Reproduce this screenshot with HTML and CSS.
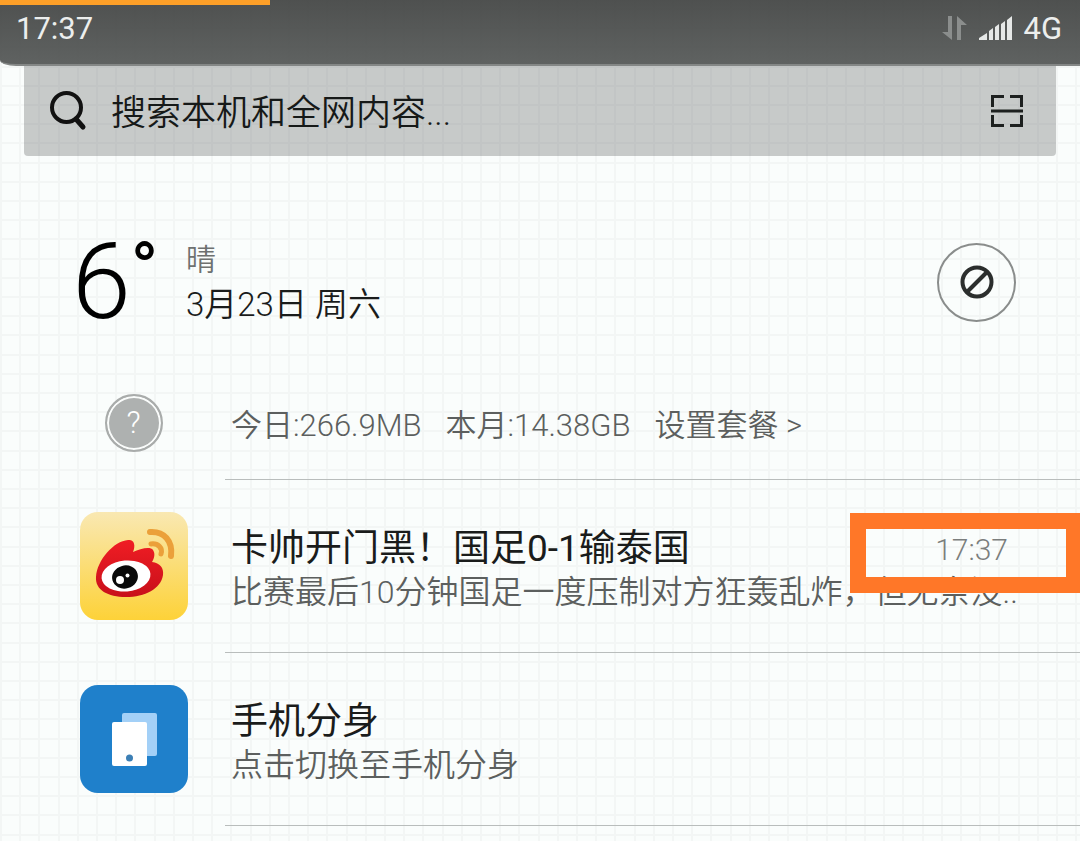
FILE: index.html
```html
<!DOCTYPE html>
<html lang="zh-CN">

<head>
    <meta charset="utf-8">
    <title>通知中心</title>
    <meta name="viewport" content="width=device-width, initial-scale=1">
    <link rel="stylesheet" href="styles.css">
</head>

<body>
    <header class="status-bar">
        <div class="progress"></div>
        <span class="clock">17:37</span>
        <div class="status-icons">
            <svg class="data-arrows" width="28" height="26" viewBox="0 0 28 26">
                <path d="M7 1h4v24L1 17h6zM16 25V1l10 9h-6v15z" fill="#8b8e8d" />
            </svg>
            <svg class="signal" width="34" height="24" viewBox="0 0 34 24">
                <path d="M0 24v-2l8-5v7zM10 24v-9l4-3v12zM16 24V11l4-3v16zM22 24V8l4-3v19zM28 24V4l5-4v24z" fill="#e6e8e7" />
            </svg>
            <span class="network">4G</span>
        </div>
    </header>

    <form class="search">
        <svg width="38" height="40" viewBox="0 0 38 40" fill="none" stroke="#111">
            <circle cx="16.500" cy="16.500" r="14.500" stroke-width="4" />
            <path d="M26 28l7 8" stroke-width="5" stroke-linecap="round" />
        </svg>
        <input type="text" class="search-input" placeholder="搜索本机和全网内容..." aria-label="搜索">
        <button type="button" class="scan" aria-label="扫一扫">
            <svg width="34" height="34" viewBox="0 0 34 34" fill="none" stroke="#1d201f" stroke-width="3">
                <path d="M14 2.500H2.500V13M20 2.500h11.500V13M2.500 21v10.500H14M31.500 21v10.500H20M1 17h32" />
            </svg>
        </button>
    </form>

    <main>
        <section class="weather">
            <div class="temp">6<span class="degree">°</span></div>
            <div class="weather-info">
                <div class="condition">晴</div>
                <div class="date">3月23日 周六</div>
            </div>
            <button type="button" class="clear-btn" aria-label="清除通知">
                <svg width="34" height="34" viewBox="0 0 34 34" fill="none" stroke="#2b2e2d" stroke-width="4">
                    <circle cx="17" cy="17" r="14.5" />
                    <path d="M7 27L27 7" />
                </svg>
            </button>
        </section>

        <section class="row usage">
            <div class="row-icon">
                <span class="help">?</span>
            </div>
            <div class="row-body usage-body">
                <span>今日:266.9MB</span>
                <span>本月:14.38GB</span>
                <a href="#" class="plan">设置套餐 &gt;</a>
            </div>
        </section>

        <article class="row">
            <div class="row-icon">
                <svg class="app-icon" viewBox="0 0 108 108">
                    <defs>
                        <linearGradient id="gold" x1="0" y1="0" x2="0" y2="1">
                            <stop offset="0" stop-color="#f9e8b2" />
                            <stop offset="1" stop-color="#fdd238" />
                        </linearGradient>
                        <linearGradient id="red" x1="0" y1="0" x2="0" y2="1">
                            <stop offset="0" stop-color="#f01d24" />
                            <stop offset="1" stop-color="#c8101a" />
                        </linearGradient>
                    </defs>
                    <rect width="108" height="108" rx="18" fill="url(#gold)" />
                    <path d="M16 65C17 48 34 29 48 28c6-1 8 5 5 12 7-3 17-6 20-2 2 3 2 7-1 12 8 1 12 6 11 13C81 77 65 85 46 85 28 85 15 78 16 65z" fill="url(#red)" />
                    <ellipse cx="46" cy="64" rx="24.500" ry="15.500" fill="#fff" transform="rotate(-5 46 64)" />
                    <ellipse cx="45" cy="65" rx="13" ry="11.500" fill="#0a0a0a" transform="rotate(-15 45 65)" />
                    <circle cx="40" cy="68" r="4" fill="#fff" />
                    <circle cx="47.500" cy="63.500" r="2" fill="#fff" />
                    <g fill="none" stroke="#eba03a" stroke-linecap="round">
                        <path d="M70 20c14-1 23 9 21 24" stroke-width="6" />
                        <path d="M71 32c7-1 12 4 10 10" stroke-width="5" />
                    </g>
                </svg>
            </div>
            <div class="row-body">
                <div class="row-head">
                    <h2 class="row-title">卡帅开门黑！国足0-1输泰国</h2>
                    <time class="row-time">17:37</time>
                </div>
                <p class="row-text">比赛最后10分钟国足一度压制对方狂轰乱炸，但无奈没..</p>
            </div>
            <div class="highlight"></div>
        </article>

        <article class="row">
            <div class="row-icon">
                <svg class="app-icon" viewBox="0 0 108 108">
                    <rect width="108" height="108" rx="18" fill="#1f80cb" />
                    <rect x="42" y="28" width="35" height="43" rx="2" fill="#a3d0f7" />
                    <rect x="32" y="37" width="35" height="44" rx="2" fill="#fff" />
                    <circle cx="49.500" cy="73" r="3.500" fill="#3c7fb5" />
                </svg>
            </div>
            <div class="row-body">
                <div class="row-head">
                    <h2 class="row-title">手机分身</h2>
                </div>
                <p class="row-text">点击切换至手机分身</p>
            </div>
        </article>
    </main>
</body>

</html>
```

FILE: styles.css
```css
* {
    box-sizing: border-box;
}

/* squared paper: five lines to each 96px tile */
body {
    --line: #f3f6f5;
    --stops: var(--line) 0 2px, transparent 2px 19px, var(--line) 19px 21px, transparent 21px 38px, var(--line) 38px 40px, transparent 40px 58px, var(--line) 58px 60px, transparent 60px 77px, var(--line) 77px 79px, transparent 79px;
    margin: 0;
    background-color: #fafdfc;
    background-image: linear-gradient(to right, var(--stops)), linear-gradient(to bottom, var(--stops));
    background-size: 96px 96px;
    background-position: 0 8px;
    font-family: Roboto, "Noto Sans CJK SC", sans-serif;
    font-weight: 350;
    color: #1a1c1b;
}

.status-bar {
    position: relative;
    display: flex;
    align-items: center;
    justify-content: space-between;
    height: 66px;
    padding: 0 18px 8px 16px;
    background: linear-gradient(rgba(64, 66, 65, 0.92), rgba(82, 85, 84, 0.92));
    border-bottom: 2px solid #848786;
    border-bottom-left-radius: 16px 6px;
    color: #eceeed;
    font-size: 31px;
    font-weight: 400;
}

.progress {
    position: absolute;
    top: 0;
    left: 0;
    width: 25%;
    height: 5px;
    background: #fd9f28;
}

.status-icons {
    display: flex;
    align-items: center;
    gap: 10px;
}

.search {
    display: flex;
    align-items: center;
    height: 90px;
    margin: 0 24px;
    padding: 0 32px 0 26px;
    border-radius: 0 0 4px 4px;
    background: rgba(115, 119, 118, 0.38);
}

.search-input {
    flex: 1;
    min-width: 0;
    padding: 4px 0 0;
    margin-left: 23px;
    border: 0;
    background: none;
    outline: none;
    font: inherit;
    font-size: 35px;
}

.search-input::placeholder {
    color: #161918;
    opacity: 1;
}

.scan {
    display: flex;
    padding: 0;
    border: 0;
    background: none;
}

.weather {
    display: flex;
    align-items: center;
    height: 212px;
    padding: 40px 64px 0 72px;
}

.temp {
    width: 114px;
    font-size: 106px;
    font-weight: 300;
    line-height: 106px;
    color: #000;
    white-space: nowrap;
}

.degree {
    font-size: 72px;
    font-weight: 500;
    line-height: 0;
    vertical-align: 25px;
}

.weather-info {
    flex: 1;
    font-size: 33px;
    line-height: 45px;
}

.condition {
    font-size: 30px;
    color: #6e7170;
}

.clear-btn {
    display: flex;
    align-items: center;
    justify-content: center;
    width: 79px;
    height: 79px;
    padding: 0;
    border: 2px solid #8a8d8c;
    border-radius: 50%;
    background: none;
}

.row {
    position: relative;
    display: flex;
    height: 173px;
}

.row-icon {
    display: flex;
    align-items: center;
    justify-content: center;
    width: 225px;
    padding: 0 0 2px 42px;
}

.app-icon {
    width: 108px;
    height: 108px;
}

.row-body {
    flex: 1;
    min-width: 0;
    padding: 44px 72px 0 6px;
    border-bottom: 1px solid #b9bdbc;
}

.row-head {
    display: flex;
    align-items: center;
    justify-content: space-between;
}

.row-title {
    margin: 0;
    font-size: 37px;
    font-weight: 400;
    line-height: 50px;
}

.row-time {
    font-size: 30px;
    color: #7b7e7d;
}

.row-text {
    margin: 0;
    font-size: 32px;
    line-height: 36px;
    color: #5c5f5e;
    white-space: nowrap;
}

.usage {
    height: 112px;
}

.usage-body {
    display: flex;
    align-items: center;
    gap: 24px;
    padding: 0 72px 2px 6px;
    font-size: 31px;
    color: #5c5f5e;
    white-space: nowrap;
}

.help {
    width: 58px;
    height: 58px;
    border: 2px solid #a9acab;
    border-radius: 50%;
    background: #aeb1b0;
    box-shadow: inset 0 0 0 2px #fafcfb;
    color: #fff;
    font-size: 31px;
    line-height: 54px;
    text-align: center;
}

.plan {
    color: inherit;
    text-decoration: none;
}

/* frame around the time of the news item */
.highlight {
    position: absolute;
    top: 33px;
    right: 0;
    width: 230px;
    height: 80px;
    border: 16px solid #ff7728;
    border-right-width: 14px;
}
```
